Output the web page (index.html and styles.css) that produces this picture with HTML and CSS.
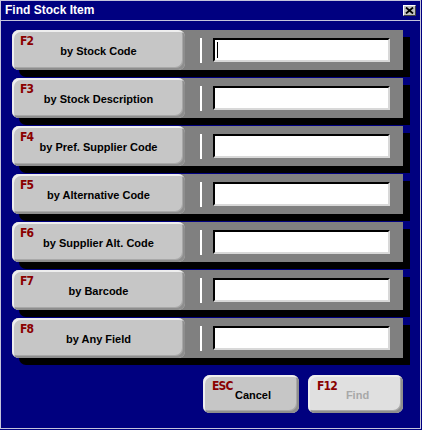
FILE: index.html
```html
<!DOCTYPE html>
<html>
<head>
<meta charset="utf-8">
<link rel="stylesheet" href="styles.css">
</head>
<body>
<div class="window">
  <div class="titlebar">
    <span class="title">Find Stock Item</span>
    <span class="close"><svg width="9" height="7" viewBox="0 0 9 7"><path d="M1 0.5 L8 6.5 M8 0.5 L1 6.5" stroke="#000" stroke-width="1.8" fill="none"/></svg></span>
  </div>
  <div class="content">
    <div class="row">
      <div class="btn"><span class="key">F2</span><span class="label">by Stock Code</span></div>
      <div class="panel"><span class="sep"></span><span class="field"><span class="caret"></span></span></div>
    </div>
    <div class="row">
      <div class="btn"><span class="key">F3</span><span class="label">by Stock Description</span></div>
      <div class="panel"><span class="sep"></span><span class="field"></span></div>
    </div>
    <div class="row">
      <div class="btn"><span class="key">F4</span><span class="label">by Pref. Supplier Code</span></div>
      <div class="panel"><span class="sep"></span><span class="field"></span></div>
    </div>
    <div class="row">
      <div class="btn"><span class="key">F5</span><span class="label">by Alternative Code</span></div>
      <div class="panel"><span class="sep"></span><span class="field"></span></div>
    </div>
    <div class="row">
      <div class="btn"><span class="key">F6</span><span class="label">by Supplier Alt. Code</span></div>
      <div class="panel"><span class="sep"></span><span class="field"></span></div>
    </div>
    <div class="row">
      <div class="btn"><span class="key">F7</span><span class="label">by Barcode</span></div>
      <div class="panel"><span class="sep"></span><span class="field"></span></div>
    </div>
    <div class="row">
      <div class="btn"><span class="key">F8</span><span class="label">by Any Field</span></div>
      <div class="panel"><span class="sep"></span><span class="field"></span></div>
    </div>
    <div class="actions">
      <div class="action"><span class="key">ESC</span><span class="label">Cancel</span></div>
      <div class="action disabled"><span class="key">F12</span><span class="label">Find</span></div>
    </div>
  </div>
</div>
</body>
</html>
```
FILE: styles.css
```css
html, body {
  margin: 0;
  padding: 0;
  background: #000080;
}
.window {
  width: 419px;
  height: 427px;
  border: 1px solid #c4c4dc;
  background: #00007f;
  font-family: "Liberation Sans", Arial, sans-serif;
}
.titlebar {
  height: 19px;
  border-bottom: 1px solid #c4c4dc;
  display: flex;
  align-items: center;
  justify-content: space-between;
  padding: 0 4px 0 4px;
  background: #000080;
}
.title {
  color: #fff;
  font-weight: bold;
  font-size: 12px;
  line-height: 19px;
}
.close {
  width: 11px;
  height: 9px;
  background: #c0c0c0;
  border-style: solid;
  border-width: 1px;
  border-color: #fff #404040 #404040 #fff;
  display: flex;
  align-items: center;
  justify-content: center;
}
.close svg { display: block; }
.content {
  padding: 9px 0 0 11px;
  display: flex;
  flex-direction: column;
  gap: 8px;
  width: 391px;
}
.row {
  display: flex;
  width: 391px;
  height: 40px;
  background: #808080;
  border-radius: 7px 0 0 7px;
  box-shadow: 7px 7px 0 #000;
}
.btn, .action {
  position: relative;
  box-sizing: border-box;
  background: #c6c6c6;
  border-radius: 7px;
  box-shadow: inset 2px 2px 0 #eeeeee, inset -2px -2px 0 #8e8e8e, inset -3px -3px 0 #a8a8a8;
  display: flex;
  align-items: center;
  justify-content: center;
}
.btn {
  width: 173px;
  height: 40px;
  flex: none;
}
.label {
  font-weight: bold;
  font-size: 11px;
  color: #000;
  padding-top: 2px;
}
.key {
  position: absolute;
  left: 8px;
  top: 5px;
  font-family: "DejaVu Sans Condensed", "DejaVu Sans", sans-serif;
  font-weight: bold;
  font-size: 12px;
  line-height: 12px;
  color: #8a0000;
  letter-spacing: -0.8px;
}
.panel {
  flex: 1;
  display: flex;
  align-items: center;
  padding-left: 15px;
}
.sep {
  width: 2px;
  height: 25px;
  background: #fff;
  margin-right: 11px;
}
.field {
  box-sizing: border-box;
  width: 177px;
  height: 24px;
  background: #fff;
  border-style: solid;
  border-width: 2px;
  border-color: #000 #d8d8d8 #d8d8d8 #000;
  display: flex;
  align-items: center;
  padding-left: 2px;
}
.caret {
  width: 1px;
  height: 16px;
  background: #000;
}
.actions {
  display: flex;
  justify-content: flex-end;
  gap: 9px;
  margin-top: 9px;
}
.action {
  width: 96px;
  height: 38px;
}
.action .key {
  left: 9px;
  top: 5px;
}
.action .label {
  padding-top: 2px;
  padding-left: 4px;
}
.action.disabled {
  width: 95px;
  background: #e0e0e0;
}
.action.disabled .label {
  color: #a8a8a8;
}
```
